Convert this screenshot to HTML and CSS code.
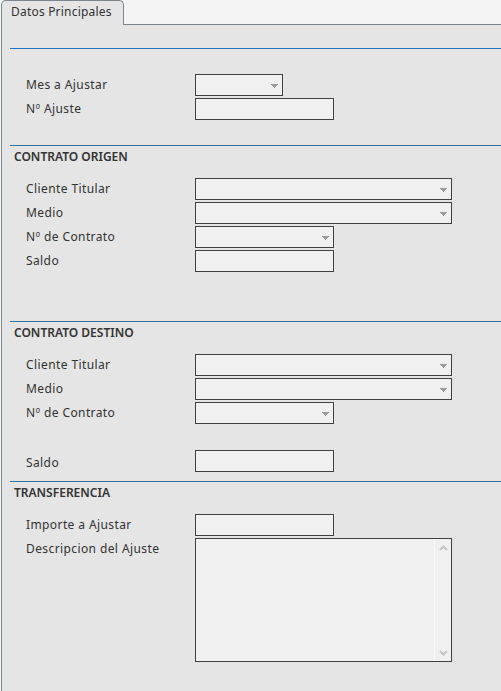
FILE: index.html
```html
<!DOCTYPE html>
<html>
<head>
<meta charset="utf-8">
<title>Ajuste</title>
<link rel="stylesheet" href="styles.css">
</head>
<body>
    <div class="tabs">
        <div class="tab">Datos Principales</div>
        <div class="tab-rest"></div>
    </div>

    <div class="panel">
        <div class="rule"></div>

        <div class="fields first">
            <label>Mes a Ajustar</label>
            <div class="select small"><span></span><svg class="arrow" width="7" height="4"><rect x="0" y="0" width="7" height="1"/><rect x="1" y="1" width="5" height="1"/><rect x="2" y="2" width="3" height="1"/><rect x="3" y="3" width="1" height="1"/></svg></div>
            <label>Nº Ajuste</label>
            <div class="input medium"></div>
        </div>

        <section class="group origen">
            <h3>CONTRATO ORIGEN</h3>
            <div class="fields">
                <label>Cliente Titular</label>
                <div class="select large"><span></span><svg class="arrow" width="7" height="4"><rect x="0" y="0" width="7" height="1"/><rect x="1" y="1" width="5" height="1"/><rect x="2" y="2" width="3" height="1"/><rect x="3" y="3" width="1" height="1"/></svg></div>
                <label>Medio</label>
                <div class="select large"><span></span><svg class="arrow" width="7" height="4"><rect x="0" y="0" width="7" height="1"/><rect x="1" y="1" width="5" height="1"/><rect x="2" y="2" width="3" height="1"/><rect x="3" y="3" width="1" height="1"/></svg></div>
                <label>Nº de Contrato</label>
                <div class="select medium"><span></span><svg class="arrow" width="7" height="4"><rect x="0" y="0" width="7" height="1"/><rect x="1" y="1" width="5" height="1"/><rect x="2" y="2" width="3" height="1"/><rect x="3" y="3" width="1" height="1"/></svg></div>
                <label>Saldo</label>
                <div class="input medium"></div>
            </div>
        </section>

        <section class="group destino">
            <h3>CONTRATO DESTINO</h3>
            <div class="fields">
                <label>Cliente Titular</label>
                <div class="select large"><span></span><svg class="arrow" width="7" height="4"><rect x="0" y="0" width="7" height="1"/><rect x="1" y="1" width="5" height="1"/><rect x="2" y="2" width="3" height="1"/><rect x="3" y="3" width="1" height="1"/></svg></div>
                <label>Medio</label>
                <div class="select large"><span></span><svg class="arrow" width="7" height="4"><rect x="0" y="0" width="7" height="1"/><rect x="1" y="1" width="5" height="1"/><rect x="2" y="2" width="3" height="1"/><rect x="3" y="3" width="1" height="1"/></svg></div>
                <label>Nº de Contrato</label>
                <div class="select medium"><span></span><svg class="arrow" width="7" height="4"><rect x="0" y="0" width="7" height="1"/><rect x="1" y="1" width="5" height="1"/><rect x="2" y="2" width="3" height="1"/><rect x="3" y="3" width="1" height="1"/></svg></div>
                <div class="blank"></div>
                <div class="blank"></div>
                <label class="low">Saldo</label>
                <div class="input medium"></div>
            </div>
        </section>

        <section class="group transferencia">
            <h3>TRANSFERENCIA</h3>
            <div class="fields">
                <label>Importe a Ajustar</label>
                <div class="input medium"></div>
                <label>Descripcion del Ajuste</label>
                <div class="memo">
                    <div class="memo-text"></div>
                    <div class="scrollbar">
                        <svg width="9" height="6"><polyline points="1,5 4.5,1.5 8,5" fill="none" stroke="#c4c4c4" stroke-width="2"/></svg>
                        <svg width="9" height="6"><polyline points="1,1 4.5,4.5 8,1" fill="none" stroke="#c4c4c4" stroke-width="2"/></svg>
                    </div>
                </div>
            </div>
        </section>
    </div>
</body>
</html>
```

FILE: styles.css
```css
body {
    margin: 0;
    background-color: #f4f4f4;
    font-family: "Noto Sans", sans-serif;
    font-size: 12px;
    color: #333;
}

/* pestañas */
.tabs {
    display: flex;
    height: 25px;
}

.tab {
    box-sizing: border-box;
    width: 123px;
    height: 25px;
    margin-left: 1px;
    padding-left: 9px;
    line-height: 22px;
    letter-spacing: 0.2px;
    border: 1px solid #7d868c;
    border-bottom: none;
    border-radius: 5px 5px 0 0;
    background-color: #e5e5e5;
}

.tab-rest {
    flex: 1;
    border-bottom: 1px solid #7d868c;
}

.panel {
    margin-left: 1px;
    padding: 23px 0 30px 8px;
    border-left: 1px solid #7d868c;
    background-color: #e5e5e5;
    min-height: 613px;
}

.rule {
    border-top: 1px solid #1f74c0;
}

/* filas del formulario */
.fields {
    display: grid;
    grid-template-columns: 169px auto;
    row-gap: 2px;
    padding-left: 16px;
    margin-top: 10px;
    justify-items: start;
}

.fields.first {
    margin-top: 25px;
    margin-bottom: 25px;
}

.fields label {
    line-height: 22px;
    letter-spacing: 0.4px;
    white-space: nowrap;
}

.fields label.low {
    align-self: end;
    line-height: 18px;
}

.blank {
    height: 22px;
}

.group {
    border-top: 1px solid #3071a5;
}

.group h3 {
    margin: 0;
    padding-left: 4px;
    line-height: 22px;
    font-size: 12px;
    font-weight: 600;
    color: #333;
}

.origen {
    padding-bottom: 49px;
}

.destino {
    padding-bottom: 9px;
}

.input,
.select,
.memo {
    box-sizing: border-box;
    height: 22px;
    border: 1px solid #404040;
    background-color: #f0f0f0;
}

.select {
    display: flex;
    align-items: center;
    justify-content: flex-end;
    padding: 1px 4px 0 0;
}

.arrow {
    fill: #9a9a9a;
}

.small { width: 88px; }
.medium { width: 139px; }
.large { width: 257px; }

.memo {
    display: flex;
    width: 257px;
    height: 124px;
}

.memo-text {
    flex: 1;
}

.scrollbar {
    width: 16px;
    border-left: 1px solid #f9f9f9;
    display: flex;
    flex-direction: column;
    justify-content: space-between;
    align-items: center;
    padding: 6px 0 5px;
}
```
